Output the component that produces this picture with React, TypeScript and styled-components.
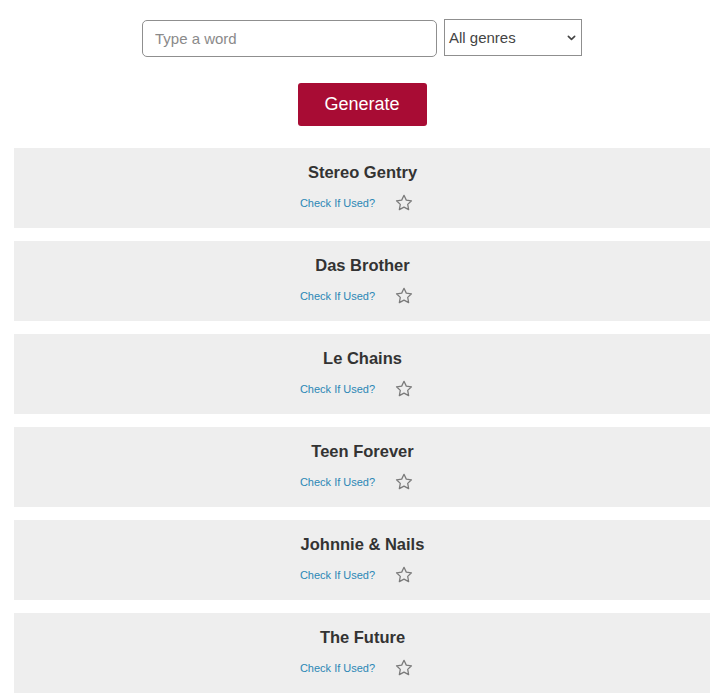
import React from "react";
import styled, { createGlobalStyle } from "styled-components";

const Global = createGlobalStyle`
  html, body { margin: 0; padding: 0; background: #fff; }
  body { font-family: "Liberation Sans", Arial, Helvetica, sans-serif; }
  * { box-sizing: border-box; }
`;

const Page = styled.div`
  width: 696px;
  margin-left: 14px;
  padding-top: 19px;
`;

const Form = styled.div`
  display: flex;
  justify-content: center;
  align-items: flex-start;
  gap: 7px;
`;

const WordInput = styled.input`
  width: 295px;
  height: 37px;
  margin-top: 1px;
  border: 1px solid #8f8f8f;
  border-radius: 5px;
  padding: 0 12px;
  font-family: "Liberation Sans", Arial, sans-serif;
  font-size: 15px;
  color: #333;
  background: #fff;
  &::placeholder { color: #8a8a8a; }
`;

const GenreSelect = styled.div`
  width: 138px;
  height: 37px;
  border: 1px solid #8f8f8f;
  display: flex;
  align-items: center;
  justify-content: space-between;
  padding: 0 5px 0 4px;
  font-size: 15px;
  color: #444;
  background: #fff;
`;

const ButtonRow = styled.div`
  display: flex;
  justify-content: center;
  margin-top: 26px;
`;

const GenerateButton = styled.button`
  width: 129px;
  height: 43px;
  border: none;
  border-radius: 3px;
  background: #a80c34;
  color: #fff;
  font-family: "Liberation Sans", Arial, sans-serif;
  font-size: 18px;
`;

const List = styled.div`
  display: flex;
  flex-direction: column;
  gap: 13px;
  margin-top: 22px;
`;

const Card = styled.div`
  height: 80px;
  background: #eeeeee;
  display: flex;
  flex-direction: column;
  align-items: center;
  padding-top: 15px;
`;

const Title = styled.div`
  font-size: 16.5px;
  font-weight: bold;
  color: #333;
  line-height: 19px;
  margin-left: 1px;
`;

const Actions = styled.div`
  display: flex;
  align-items: center;
  gap: 20px;
  margin-top: 12px;
  margin-right: 11px;
`;

const CheckLink = styled.a`
  font-size: 11px;
  color: #2b87b5;
  text-decoration: none;
`;

const Star = () => (
  <svg width="18" height="17" viewBox="0 0 24 23" fill="none" stroke="#7a7a7a" strokeWidth="1.7" strokeLinejoin="round">
    <path d="M12 1.8l3.1 6.5 7 .9-5.1 4.9 1.3 7-6.3-3.4-6.3 3.4 1.3-7L1.9 9.2l7-.9z" />
  </svg>
);

const Chevron = () => (
  <svg width="9" height="6" viewBox="0 0 10 6" fill="none" stroke="#444" strokeWidth="1.8" strokeLinecap="round" strokeLinejoin="round">
    <path d="M1.5 1.2L5 4.6l3.5-3.4" />
  </svg>
);

const names = [
  "Stereo Gentry",
  "Das Brother",
  "Le Chains",
  "Teen Forever",
  "Johnnie & Nails",
  "The Future",
];

export default function App() {
  return (
    <>
      <Global />
      <Page>
        <Form>
          <WordInput placeholder="Type a word" />
          <GenreSelect>
            <span>All genres</span>
            <Chevron />
          </GenreSelect>
        </Form>
        <ButtonRow>
          <GenerateButton>Generate</GenerateButton>
        </ButtonRow>
        <List>
          {names.map((n) => (
            <Card key={n}>
              <Title>{n}</Title>
              <Actions>
                <CheckLink href="#">Check If Used?</CheckLink>
                <Star />
              </Actions>
            </Card>
          ))}
        </List>
      </Page>
    </>
  );
}
